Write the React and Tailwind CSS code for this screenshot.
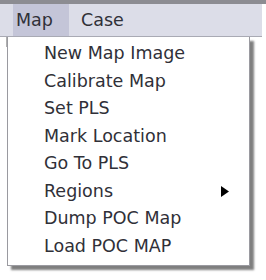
export default function App() {
  const items = [
    'New Map Image',
    'Calibrate Map',
    'Set PLS',
    'Mark Location',
    'Go To PLS',
    'Regions',
    'Dump POC Map',
    'Load POC MAP',
  ];

  return (
    <div className="w-[266px] h-[280px] bg-white font-['DejaVu_Sans',sans-serif] text-[#303038] overflow-hidden">
      <div className="h-[4px] bg-[#8c8c92]" />
      <div className="h-[33px] w-[262px] flex bg-[#dcdde8] border-b border-[#a9aab4]">
        <div className="ml-[13px] w-[56px] flex items-center pl-[3px] bg-[#c4c5d8] text-[17.5px]">Map</div>
        <div className="ml-[12px] flex items-center text-[17.5px]">Case</div>
      </div>
      <div className="flex">
        <div className="w-[7px] h-[10px] border-r border-[#b0b0b0]" />
        <div className="w-[243px] h-[229px] bg-white border border-[#9a9aa0] border-t-0 shadow-[4px_4px_2px_rgba(0,0,0,0.5)] pt-[3px]">
          {items.map((label) => (
            <div key={label} className="h-[27.5px] flex items-center pl-[36px] pr-[18px] text-[17.5px] leading-none">
              <span className="flex-1">{label}</span>
              {label === 'Regions' && (
                <svg width="8" height="11" viewBox="0 0 8 11" className="mr-[2px]">
                  <polygon points="0,0 8,5.5 0,11" fill="#000" />
                </svg>
              )}
            </div>
          ))}
        </div>
      </div>
    </div>
  );
}
